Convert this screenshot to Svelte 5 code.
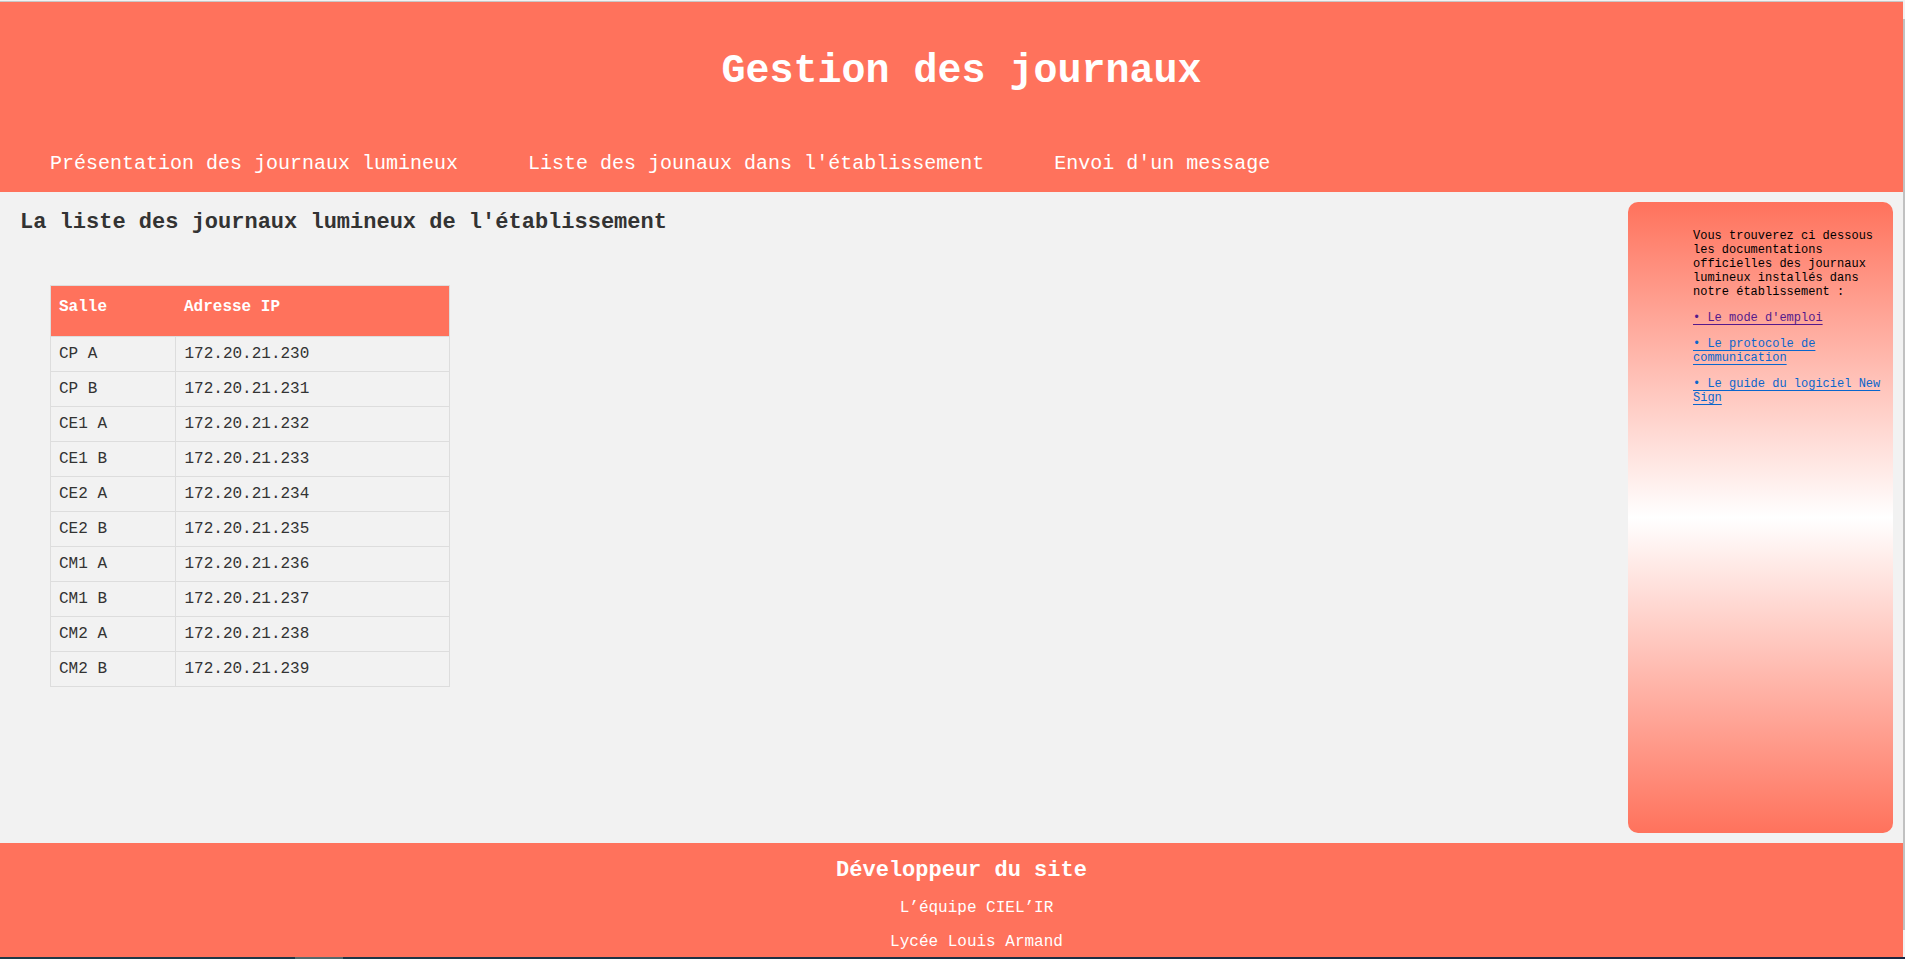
<script>
  const nav = [
    'Présentation des journaux lumineux',
    "Liste des jounaux dans l'établissement",
    "Envoi d'un message"
  ];
  const rooms = ['CP A', 'CP B', 'CE1 A', 'CE1 B', 'CE2 A', 'CE2 B', 'CM1 A', 'CM1 B', 'CM2 A', 'CM2 B'];
  const displays = rooms.map((room, i) => ({ room, ip: `172.20.21.${230 + i}` }));
  const docs = [
    { label: "Le mode d'emploi", visited: true },
    { label: 'Le protocole de communication', visited: false },
    { label: 'Le guide du logiciel New Sign', visited: false }
  ];
</script>

<div class="frame">
  <div class="page">
    <header>
      <h1>Gestion des journaux</h1>
      <nav>
        {#each nav as item}
          <a href="#top">{item}</a>
        {/each}
      </nav>
    </header>

    <div class="content">
      <main>
        <h2>La liste des journaux lumineux de l'établissement</h2>
        <table>
          <thead>
            <tr><th class="room" scope="col">Salle</th><th scope="col">Adresse IP</th></tr>
          </thead>
          <tbody>
            {#each displays as d}
              <tr><td>{d.room}</td><td>{d.ip}</td></tr>
            {/each}
          </tbody>
        </table>
      </main>

      <aside>
        <p>Vous trouverez ci dessous les documentations officielles des journaux lumineux installés dans notre établissement :</p>
        {#each docs as doc}
          <p><a href="#docs" class:visited={doc.visited}>• {doc.label}</a></p>
        {/each}
      </aside>
    </div>

    <footer>
      <h2>Développeur du site</h2>
      <p>L’équipe CIEL’IR</p>
      <p>Lycée Louis Armand</p>
    </footer>
  </div>
  <div class="scrollbar"><div class="thumb"></div></div>
  <div class="taskbar"><div class="active"></div></div>
</div>

<style>
  :global(body) {
    background: #f2f2f2;
  }

  .frame {
    box-sizing: border-box;
    min-height: 100vh;
    display: grid;
    grid-template-columns: 1fr 2px;
    grid-template-rows: 1fr 2px;
    padding-top: 1px;
    font-family: 'Liberation Mono', 'Courier New', monospace;
    color: #333;
  }

  .page {
    display: flex;
    flex-direction: column;
    border-top: 1px solid #c8c8c8;
  }

  h1,
  h2,
  p {
    margin: 0;
  }

  h2 {
    font-size: 22px;
    line-height: 28px;
  }

  header {
    padding: 46px 50px 16px;
    background: #ff725c;
    color: #fff;
  }

  h1 {
    padding-left: 20px;
    font-size: 40px;
    line-height: 48px;
    text-align: center;
  }

  nav {
    display: flex;
    gap: 70px;
    margin-top: 56px;
    font-size: 20px;
    line-height: 24px;
  }

  nav a {
    color: #fff;
    text-decoration: none;
  }

  .content {
    flex: 1;
    display: flex;
  }

  main {
    flex: 1;
    padding: 17px 20px;
  }

  table {
    width: 400px;
    margin: 48px 0 0 30px;
    table-layout: fixed;
    border-collapse: collapse;
    border: 1px solid #ddd;
    font-size: 16px;
    line-height: 18px;
    text-align: left;
  }

  .room {
    width: 107px;
  }

  th {
    padding: 12px 9px 20px;
    background: #ff725c;
    color: #fff;
  }

  td {
    padding: 8px 9px;
    border: 1px solid #ddd;
  }

  th:first-child,
  td:first-child {
    padding-left: 8px;
  }

  aside {
    box-sizing: border-box;
    width: 265px;
    margin: 10px;
    padding: 27px 5px 27px 65px;
    display: flex;
    flex-direction: column;
    gap: 12px;
    border-radius: 10px;
    background: linear-gradient(#ff725c, #fff, #ff725c);
    color: #000;
    font-size: 12px;
    line-height: 14px;
  }

  aside a {
    color: #0a66cc;
    text-underline-offset: 3px;
  }

  aside a.visited {
    color: #551a8b;
  }

  footer {
    display: flex;
    flex-direction: column;
    gap: 16px;
    padding: 14px 0 6px;
    background: #ff725c;
    color: #fff;
    font-size: 16px;
    line-height: 18px;
    text-align: center;
  }

  footer h2 {
    margin-bottom: -2px;
    padding-left: 20px;
  }

  footer p {
    padding-left: 50px;
  }

  .scrollbar {
    padding: 18px 0 27px;
    display: flex;
    background: #f1f1f1;
  }

  .thumb {
    flex: 1;
    background: #c1c1c1;
  }

  .taskbar {
    grid-column: 1 / -1;
    background: linear-gradient(90deg, #1f3a47, #1b2540);
  }

  .active {
    width: 48px;
    height: 2px;
    margin-left: 295px;
    background: #56696b;
  }
</style>
